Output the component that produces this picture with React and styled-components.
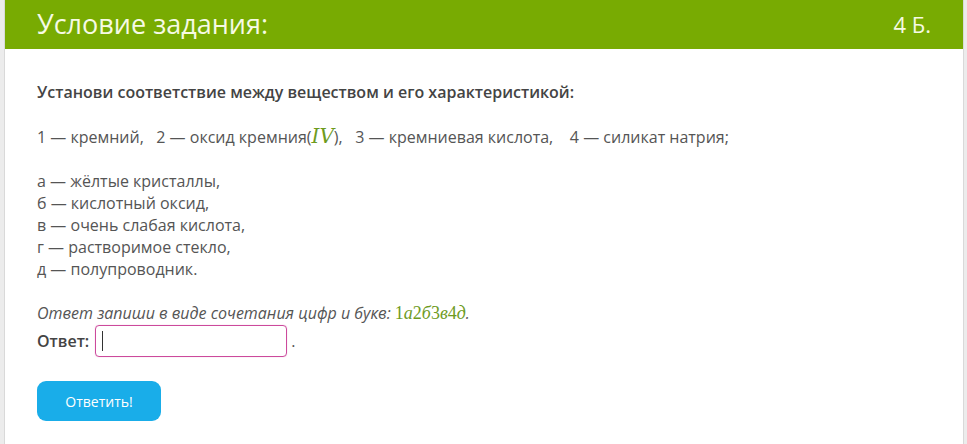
import styled, { createGlobalStyle } from "styled-components";

const GlobalStyle = createGlobalStyle`
  html, body {
    margin: 0;
    padding: 0;
    background: #ececec;
  }
  body {
    font-family: "Open Sans", "Noto Sans", sans-serif;
  }
`;

const Page = styled.div`
  padding: 0 3px 0 4px;
  height: 444px;
  overflow: hidden;
`;

const Card = styled.div`
  background: #fff;
  border-left: 1px solid #d9d9d9;
  border-right: 1px solid #d9d9d9;
  height: 100%;
`;

const Header = styled.div`
  background: #78ab02;
  height: 49px;
  display: flex;
  align-items: center;
  justify-content: space-between;
  padding: 0 32px;
  color: #f6fae4;
`;

const Title = styled.h1`
  margin: 0;
  font-size: 27px;
  font-weight: 400;
  margin-top: -2px;
`;

const Points = styled.span`
  font-size: 22px;
  margin-top: -2px;
`;

const Body = styled.div`
  padding: 32px 32px 0;
  color: #555;
  font-size: 16px;
  line-height: 22px;
`;

const Lead = styled.p`
  margin: 0 0 22px;
  font-weight: 600;
  color: #444;
`;

const Para = styled.p`
  margin: 0 0 22px;
  white-space: pre;
`;

const MathG = styled.span`
  font-family: ${(p) => p.$family || '"DejaVu Serif", "Liberation Serif", serif'};
  color: #6e9b1e;
  font-style: ${(p) => (p.$italic ? "italic" : "normal")};
  font-size: ${(p) => p.$size || "16px"};
`;

const Hint = styled.p`
  margin: 0;
  font-style: italic;
`;

const AnswerRow = styled.div`
  display: flex;
  align-items: center;
  gap: 4px;
  margin-top: 1px;
  height: 32px;
`;

const Label = styled.span`
  font-weight: 600;
  color: #444;
  margin-right: 2px;
`;

const Input = styled.div`
  width: 192px;
  height: 32px;
  border: 1px solid #cc4a9c;
  border-radius: 4px;
  box-shadow: 0 0 1px rgba(204, 74, 156, 0.5);
  display: flex;
  align-items: center;
  padding-left: 6px;
  box-sizing: border-box;
`;

const Caret = styled.span`
  width: 1px;
  height: 20px;
  background: #333;
`;

const Button = styled.button`
  margin-top: 24px;
  width: 124px;
  height: 40px;
  border: none;
  border-radius: 9px;
  background: #19ade9;
  color: #fff;
  font-family: "Open Sans", sans-serif;
  font-size: 14px;
`;

const code = ["1", "а", "2", "б", "3", "в", "4", "д"];

export default function App() {
  return (
    <>
      <GlobalStyle />
      <Page>
        <Card>
          <Header>
            <Title>Условие задания:</Title>
            <Points>4 Б.</Points>
          </Header>
          <Body>
            <Lead>Установи соответствие между веществом и его характеристикой:</Lead>
            <Para>
              1 — кремний,   2 — оксид кремния(
              <MathG $italic $size="20px">IV</MathG>),   3 — кремниевая кислота,    4 — силикат натрия;
            </Para>
            <Para>
              а — жёлтые кристаллы,{"\n"}б — кислотный оксид,{"\n"}в — очень слабая кислота,{"\n"}г — растворимое стекло,{"\n"}д — полупроводник.
            </Para>
            <Hint>
              Ответ запиши в виде сочетания цифр и букв:{" "}
              {code.map((c, i) => (
                <MathG
                  key={i}
                  $italic={i % 2 === 1}
                  $size="18px"
                  $family='"Liberation Serif", serif'
                >
                  {c}
                </MathG>
              ))}
              .
            </Hint>
            <AnswerRow>
              <Label>Ответ:</Label>
              <Input>
                <Caret />
              </Input>
              <span>.</span>
            </AnswerRow>
            <Button>Ответить!</Button>
          </Body>
        </Card>
      </Page>
    </>
  );
}
